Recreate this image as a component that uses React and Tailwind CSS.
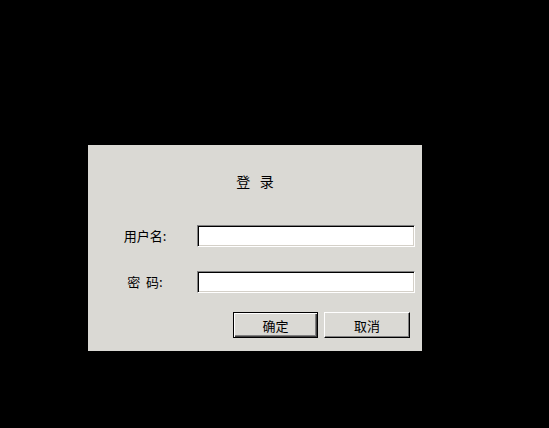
export default function App() {
    const font = { fontFamily: '"Noto Sans CJK SC", "Noto Sans", sans-serif' };

    return (
        <div className="min-h-screen w-full bg-black pt-[145px] pl-[88px]" style={font}>
            <div className="w-[334px] h-[206px] bg-[#dad9d4] flex flex-col text-[13px] text-black">
                {/* title */}
                <div className="mt-[26px] h-[20px] leading-[20px] text-center text-[14px]">
                    登&nbsp;&nbsp;&nbsp;录
                </div>

                {/* username */}
                <div className="mt-[34px] flex items-center pl-[17px]">
                    <div className="w-[80px] text-center leading-[22px]">用户名:</div>
                    <input
                        type="text"
                        className="ml-[12px] w-[218px] h-[22px] bg-white outline-none border border-t-[#808080] border-l-[#808080] border-b-white border-r-white shadow-[inset_1px_1px_#000,inset_-1px_-1px_#d4d0c8]"
                    />
                </div>

                {/* password */}
                <div className="mt-[24px] flex items-center pl-[17px]">
                    <div className="w-[80px] text-center leading-[22px]">密&nbsp;&nbsp;码:</div>
                    <input
                        type="password"
                        className="ml-[12px] w-[218px] h-[22px] bg-white outline-none border border-t-[#808080] border-l-[#808080] border-b-white border-r-white shadow-[inset_1px_1px_#000,inset_-1px_-1px_#d4d0c8]"
                    />
                </div>

                {/* buttons */}
                <div className="mt-[19px] flex justify-end gap-[6px] pr-[12px]">
                    <button className="w-[85px] h-[26px] bg-[#dad9d4] border border-black shadow-[inset_1px_1px_#fff,inset_-1px_-1px_#404040,inset_-2px_-2px_#808080] leading-none">
                        确定
                    </button>
                    <button className="w-[86px] h-[26px] bg-[#dad9d4] border border-t-white border-l-white border-r-black border-b-black shadow-[inset_-1px_-1px_#808080] leading-none">
                        取消
                    </button>
                </div>
            </div>
        </div>
    );
}
